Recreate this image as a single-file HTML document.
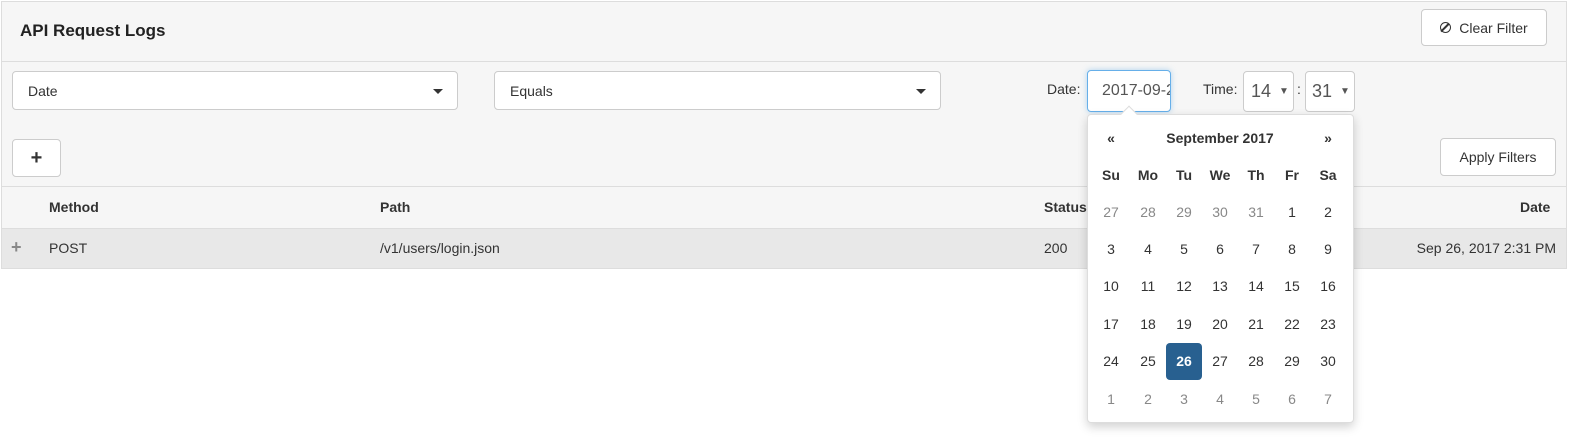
<!DOCTYPE html>
<html><head><style>
*{box-sizing:border-box;margin:0;padding:0}
body{width:1596px;height:442px;background:#fff;font-family:"Liberation Sans",sans-serif;font-size:14px;color:#333;position:relative;overflow:hidden}
.abs{position:absolute}
.panel{left:1px;top:1px;width:1566px;height:268px;border:1px solid #ddd;background:#f6f6f6}
.btn{position:absolute;background:#fff;border:1px solid #ccc;border-radius:4px;font-size:14px;display:flex;align-items:center;justify-content:center;color:#333}
.sel{position:absolute;background:#fff;border:1px solid #ccc;border-radius:4px;height:39px;padding-left:15px;display:flex;align-items:center}
.caret{position:absolute;right:14px;top:17px;width:0;height:0;border-left:5px solid transparent;border-right:5px solid transparent;border-top:5px solid #333}
.cal{left:1087px;top:114px;width:267px;height:309px;background:#fff;border:1px solid #ddd;border-radius:4px;box-shadow:0 4px 10px rgba(0,0,0,.18)}
.c{position:absolute;width:36px;text-align:center;transform:translate(-18px,-9px);line-height:18px}
</style></head><body>
<div class="abs panel"></div>
<div class="abs" style="left:2px;top:61px;width:1564px;height:1px;background:#ddd"></div>
<div class="abs" style="left:20px;top:21px;font-size:17px;font-weight:bold;color:#222">API Request Logs</div>
<div class="btn" style="left:1421px;top:9px;width:126px;height:37px"><span style="display:inline-block;width:11px;height:11px;border:1.6px solid #333;border-radius:50%;position:relative;margin-right:8px"><span style="position:absolute;left:3px;top:-1px;width:1.6px;height:11px;background:#333;transform:rotate(45deg)"></span></span>Clear Filter</div>
<div class="sel" style="left:12px;top:71px;width:446px">Date<div class="caret"></div></div>
<div class="sel" style="left:494px;top:71px;width:447px">Equals<div class="caret"></div></div>
<div class="abs" style="left:1047px;top:81px">Date:</div>
<div class="abs" style="left:1087px;top:70px;width:84px;height:42px;border:1px solid #66afe9;border-radius:4px;background:#fff;box-shadow:0 0 6px rgba(102,175,233,.5);font-size:16px;color:#555;padding:11px 0 0 14px;overflow:hidden;white-space:nowrap">2017-09-2</div>
<div class="abs" style="left:1203px;top:81px">Time:</div>
<div class="abs" style="left:1243px;top:71px;width:51px;height:41px;border:1px solid #ccc;border-radius:4px;background:#fff;font-size:18px;color:#555;padding:9px 0 0 7px">14 <span style="font-size:10px;position:relative;top:-3px;margin-left:3px">▼</span></div>
<div class="abs" style="left:1297px;top:81px">:</div>
<div class="abs" style="left:1305px;top:71px;width:50px;height:41px;border:1px solid #ccc;border-radius:4px;background:#fff;font-size:18px;color:#555;padding:9px 0 0 6px">31 <span style="font-size:10px;position:relative;top:-3px;margin-left:3px">▼</span></div>
<div class="btn" style="left:12px;top:139px;width:49px;height:38px;font-size:20px;font-weight:bold">+</div>
<div class="btn" style="left:1440px;top:138px;width:116px;height:38px">Apply Filters</div>
<div class="abs" style="left:2px;top:186px;width:1564px;height:1px;background:#ddd"></div>
<div class="abs" style="left:49px;top:199px;font-weight:bold">Method</div>
<div class="abs" style="left:380px;top:199px;font-weight:bold">Path</div>
<div class="abs" style="left:1044px;top:199px;font-weight:bold">Status</div>
<div class="abs" style="left:1520px;top:199px;font-weight:bold">Date</div>
<div class="abs" style="left:2px;top:228px;width:1564px;height:40px;background:#e8e8e8;border-top:1px solid #ddd"></div>
<div class="abs" style="left:11px;top:237px;font-size:18px;font-weight:bold;color:#888">+</div>
<div class="abs" style="left:49px;top:240px">POST</div>
<div class="abs" style="left:380px;top:240px">/v1/users/login.json</div>
<div class="abs" style="left:1044px;top:240px">200</div>
<div class="abs" style="left:1372px;top:240px;width:184px;text-align:right">Sep 26, 2017 2:31 PM</div>
<div class="abs cal"></div>
<div class="abs" style="left:1123px;top:108px;width:12px;height:12px;background:#fff;border-left:1px solid #ddd;border-top:1px solid #ddd;transform:rotate(45deg)"></div>
<div class="abs" style="left:1166px;top:343px;width:36px;height:37px;background:#286090;border-radius:4px"></div>
<div class="c abs" style="left:1111px;top:138px;font-weight:bold">«</div>
<div class="c abs" style="left:1220px;top:138px;width:140px;transform:translate(-70px,-9px);font-weight:bold">September 2017</div>
<div class="c abs" style="left:1328px;top:138px;font-weight:bold">»</div>
<div class="abs" id="g" style="left:0;top:0;font-size:14px"></div>
<script>
var xs=[1111,1148,1184,1220,1256,1292,1328],h='';
['Su','Mo','Tu','We','Th','Fr','Sa'].forEach(function(d,i){h+='<div class="c abs" style="left:'+xs[i]+'px;top:175px;font-weight:bold">'+d+'</div>'});
var days=[27,28,29,30,31,1,2];for(var i=3;i<=30;i++)days.push(i);for(i=1;i<=7;i++)days.push(i);
var ys=[212,249,286,324,361,399];
days.forEach(function(d,k){var r=Math.floor(k/7),c=k%7;var out=(r==0&&c<5)||r==5;var col=out?'#888':(d==26?'#fff':'#333');
h+='<div class="c abs" style="left:'+xs[c]+'px;top:'+ys[r]+'px;color:'+col+(d==26&&!out?';font-weight:bold':'')+'">'+d+'</div>'});
document.getElementById('g').innerHTML=h;
</script>
</body></html>
